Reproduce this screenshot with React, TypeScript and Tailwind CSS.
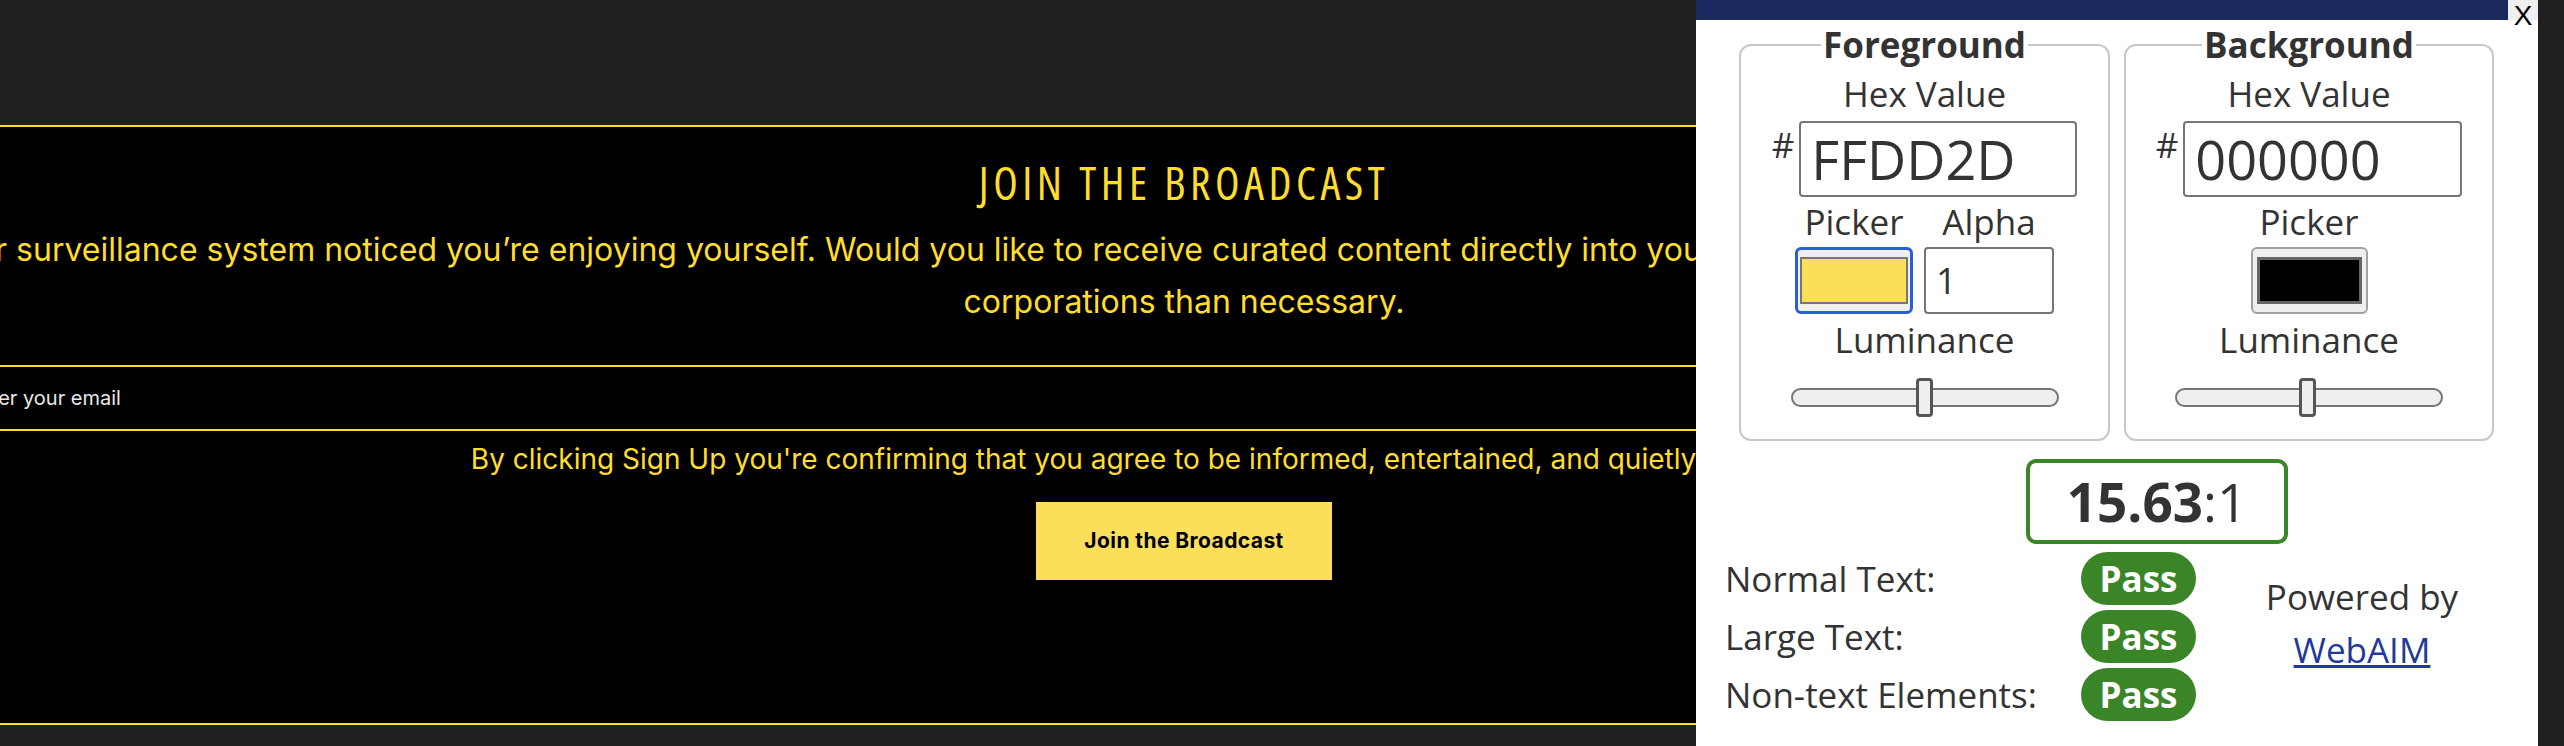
import React from 'react';

const yellow = '#ffdd2d';

const Slider: React.FC<{ width: number; thumb: number }> = ({ width, thumb }) => (
    <div className="relative mt-[14px] h-[39px]" style={{ width }}>
        <div className="absolute left-0 right-0 top-[10px] h-[19px] rounded-full border-2 border-[#767676] bg-[#efefef]" />
        <div
            className="absolute top-0 w-[17px] h-[39px] rounded-[4px] border-[3px] border-[#555] bg-[#efefef]"
            style={{ left: thumb }}
        />
    </div>
);

const HexRow: React.FC<{ value: string; width: number }> = ({ value, width }) => (
    <div className="flex items-start mt-[3px]">
        <span className="text-[35px] leading-[48px] mr-[5px]">#</span>
        <div
            className="h-[76px] border-2 border-[#767676] rounded-[4px] flex items-center pl-[10px] text-[54px] leading-none"
            style={{ width }}
        >
            {value}
        </div>
    </div>
);

const ContrastPanel: React.FC = () => {
    return (
        <div className="absolute top-0 left-[1696px] w-[842px] h-full bg-white text-[#333] font-['Open_Sans',sans-serif]">
            {/* title bar */}
            <div className="flex h-[20px]">
                <div className="w-[820px] h-[20px] bg-[#1b2a5e]" />
                <div className="relative z-10 w-[30px] h-[20px] bg-[#efefef] flex justify-center">
                    <span className="font-['Liberation_Sans',sans-serif] text-[28px] leading-[20px] pt-[6px] text-black">X</span>
                </div>
            </div>

            <div className="flex gap-[14px] pl-[43px] mt-[1px]">
                {/* Foreground */}
                <fieldset className="w-[371px] border-2 border-[#c8c8c8] rounded-[12px] pb-[22px]">
                    <legend className="mx-auto px-[2px] text-[35px] font-bold leading-[48px]">Foreground</legend>
                    <div className="flex flex-col items-center">
                        <div className="text-[35px] leading-[48px] mt-[1px]">Hex Value</div>
                        <HexRow value="FFDD2D" width={278} />
                        <div className="grid grid-cols-[118px_130px] gap-x-[11px] mt-[1px]">
                            <div className="text-center text-[35px] leading-[48px]">Picker</div>
                            <div className="text-center text-[35px] leading-[48px]">Alpha</div>
                            <div className="mt-[1px] h-[67px] rounded-[6px] border-[3px] border-[#2b5fd4] bg-[#efefef] px-[2px] py-[7px]">
                                <div className="w-full h-full border-2 border-[#777] bg-[#fadf5a]" />
                            </div>
                            <div className="mt-[1px] h-[67px] rounded-[4px] border-2 border-[#767676] flex items-center pl-[10px] text-[36px]">
                                1
                            </div>
                        </div>
                        <div className="text-[35px] leading-[48px] mt-[2px]">Luminance</div>
                        <Slider width={268} thumb={125} />
                    </div>
                </fieldset>

                {/* Background */}
                <fieldset className="w-[370px] border-2 border-[#c8c8c8] rounded-[12px] pb-[22px]">
                    <legend className="mx-auto px-[2px] text-[35px] font-bold leading-[48px]">Background</legend>
                    <div className="flex flex-col items-center">
                        <div className="text-[35px] leading-[48px] mt-[1px]">Hex Value</div>
                        <HexRow value="000000" width={279} />
                        <div className="text-[35px] leading-[48px] mt-[1px]">Picker</div>
                        <div className="mt-[1px] w-[117px] h-[67px] rounded-[6px] border-2 border-[#a0a0a0] bg-[#efefef] px-[4px] py-[8px]">
                            <div className="w-full h-full border-[3px] border-[#666] bg-black" />
                        </div>
                        <div className="text-[35px] leading-[48px] mt-[2px]">Luminance</div>
                        <Slider width={268} thumb={124} />
                    </div>
                </fieldset>
            </div>

            {/* ratio */}
            <div className="mt-[18px] ml-[330px] w-[262px] border-4 border-[#3a8527] rounded-[10px] text-center text-[53px] leading-[77px]">
                <span className="font-bold">15.63</span>:1
            </div>

            {/* results */}
            <div className="mt-[8px] ml-[29px] grid grid-cols-[356px_115px_332px] grid-rows-[53px_53px_53px] gap-y-[5px]">
                <div className="text-[35px] leading-[53px]">Normal Text:</div>
                <div className="rounded-full bg-[#3a8527] text-white font-bold text-[35px] leading-[53px] text-center">Pass</div>
                <div className="row-span-3 pt-[18px] text-center text-[35px] leading-[53px]">
                    <div>Powered by</div>
                    <a href="#" className="text-[#1f3a9c] underline">WebAIM</a>
                </div>
                <div className="text-[35px] leading-[53px]">Large Text:</div>
                <div className="rounded-full bg-[#3a8527] text-white font-bold text-[35px] leading-[53px] text-center">Pass</div>
                <div className="text-[35px] leading-[53px]">Non-text Elements:</div>
                <div className="rounded-full bg-[#3a8527] text-white font-bold text-[35px] leading-[53px] text-center">Pass</div>
            </div>
        </div>
    );
};

const App: React.FC = () => {
    return (
        <div className="relative w-[2564px] h-[746px] overflow-hidden bg-[#202020]">
            <div className="w-[2368px] flex justify-center pt-[125px]">
                <section className="w-[2560px] shrink-0 h-[600px] bg-black border-y-2 border-[#ffdd2d] flex flex-col items-center font-['Inter',sans-serif]">
                    <h2
                        className="mt-[30px] font-['Open_Sans',sans-serif] [font-stretch:75%] font-normal text-[45px] leading-[52px] tracking-[0.1em]"
                        style={{ color: yellow }}
                    >
                        JOIN THE BROADCAST
                    </h2>
                    <p className="mt-[15px] text-center text-[32px] leading-[52px] whitespace-nowrap" style={{ color: yellow }}>
                        Our surveillance system noticed you’re enjoying yourself. Would you like to receive curated content directly into your inbox, and kindly shared with no more partner
                        <br />
                        corporations than necessary.
                    </p>
                    <div className="mt-[37px] w-full h-[66px] border-y-2 border-[#ffdd2d] flex items-center pl-[64px]">
                        <span className="text-[20px] text-[#e8e8e8]">Enter your email</span>
                    </div>
                    <p className="mt-[8px] text-[28px] leading-[40px] whitespace-nowrap" style={{ color: yellow }}>
                        By clicking Sign Up you're confirming that you agree to be informed, entertained, and quietly watched by us
                    </p>
                    <button className="mt-[23px] w-[296px] h-[78px] bg-[#fbdf5a] text-black font-bold text-[21px] tracking-[0.02em]">
                        Join the Broadcast
                    </button>
                </section>
            </div>
            <ContrastPanel />
        </div>
    );
};

export default App;
